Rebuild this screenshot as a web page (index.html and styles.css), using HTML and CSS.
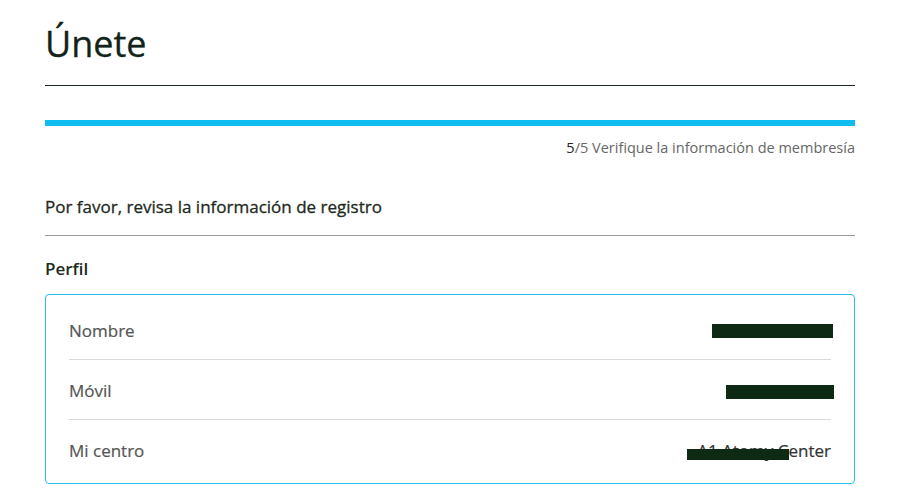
FILE: index.html
```html
<!DOCTYPE html>
<html lang="es">
<head>
<meta charset="utf-8">
<title>Únete</title>
<link rel="stylesheet" href="styles.css">
</head>
<body>
<main class="page">
  <header class="header">
    <h1 class="title">Únete</h1>
  </header>
  <div class="progress"><div class="progress-fill"></div></div>
  <p class="step"><span class="step-num">5</span>/5 Verifique la información de membresía</p>
  <h2 class="section-title">Por favor, revisa la información de registro</h2>
  <h3 class="group-title">Perfil</h3>
  <div class="card">
    <div class="row">
      <span class="label">Nombre</span>
      <span class="value"><span class="redact redact-name"></span></span>
    </div>
    <div class="row">
      <span class="label">Móvil</span>
      <span class="value"><span class="redact redact-phone"></span></span>
    </div>
    <div class="row">
      <span class="label">Mi centro</span>
      <span class="value value-center">A1 Atomy Center<span class="redact-over"></span></span>
    </div>
  </div>
</main>
</body>
</html>
```
FILE: styles.css
```css
* { box-sizing: border-box; }
html, body { margin: 0; padding: 0; background: #fff; }
body {
  font-family: "Open Sans", "Noto Sans", "DejaVu Sans", sans-serif;
  color: #222;
}
.page {
  width: 810px;
  margin-left: 45px;
}
.header {
  height: 86px;
  border-bottom: 1px solid #1b2a1e;
  display: flex;
  align-items: flex-start;
}
.title {
  margin: 0;
  padding-top: 20px;
  font-size: 36px;
  line-height: 48px;
  font-weight: 400;
  color: #12241a;
  -webkit-text-stroke: 0.3px #12241a;
}
.progress {
  margin-top: 34px;
  height: 6px;
  background: #e6e6e6;
}
.progress-fill {
  width: 100%;
  height: 100%;
  background: #11bdf0;
}
.step {
  margin: 12px 0 0;
  text-align: right;
  font-size: 14.5px;
  line-height: 20px;
  color: #666;
}
.step-num { color: #222; }
.section-title {
  margin: 37px 0 0;
  padding-bottom: 16px;
  border-bottom: 1px solid #999;
  font-size: 17px;
  line-height: 24px;
  font-weight: 400;
  color: #1d2a20;
  -webkit-text-stroke: 0.3px #1d2a20;
}
.group-title {
  margin: 21px 0 0;
  font-size: 17px;
  line-height: 24px;
  font-weight: 600;
  color: #1d2a20;
}
.card {
  margin-top: 13px;
  border: 1px solid #2bbcef;
  border-radius: 4px;
  padding: 5px 23px 4px;
}
.row {
  height: 60px;
  display: flex;
  justify-content: space-between;
  align-items: center;
  border-bottom: 1px solid #d9d9d9;
  padding-top: 1px;
}
.row:last-child { border-bottom: none; height: 59px; }
.label {
  font-size: 17px;
  color: #555;
  -webkit-text-stroke: 0.2px #555;
}
.value {
  font-size: 17px;
  color: #333;
  display: flex;
  align-items: center;
  -webkit-text-stroke: 0.2px #333;
}
.redact {
  display: inline-block;
  height: 14px;
  background: #0e2a14;
}
.redact-name { width: 121px; margin-right: -2px; margin-top: 1px; }
.redact-phone { width: 108px; margin-right: -3px; margin-top: 3px; }
.value-center { position: relative; }
.redact-over {
  position: absolute;
  right: 42px;
  top: 10px;
  width: 102px;
  height: 11px;
  background: #0e2a14;
}
```
